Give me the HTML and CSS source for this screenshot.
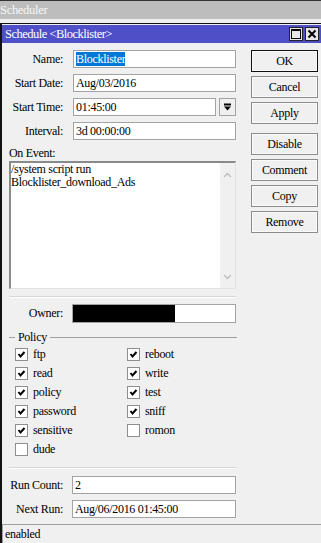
FILE: index.html
```html
<!DOCTYPE html>
<html lang="en">
<head>
  <meta charset="UTF-8" />
  <title>Scheduler</title>
  <link rel="stylesheet" href="styles.css">
</head>
<body>
  <div class="appbar">Scheduler</div>
  <div class="gap"></div>
  <div class="window">
    <!-- title bar -->
    <div class="titlebar">
      <span class="title">Schedule &lt;Blocklister&gt;</span>
      <span class="tbtns">
        <span class="tbtn"><svg width="12" height="12" viewBox="0 0 12 12"><rect x="1.5" y="1.5" width="9" height="9" fill="none" stroke="#000" stroke-width="1"/><rect x="1" y="1" width="10" height="2" fill="#000"/></svg></span>
        <span class="tbtn"><svg width="12" height="12" viewBox="0 0 12 12"><path d="M2.5 2.5 L9.5 9.5 M9.5 2.5 L2.5 9.5" stroke="#000" stroke-width="2"/></svg></span>
      </span>
    </div>
    <div class="content">
      <div class="main">
        <div class="row"><label>Name:</label><div class="field"><span class="sel">Blocklister</span></div></div>
        <div class="row"><label>Start Date:</label><div class="field">Aug/03/2016</div></div>
        <div class="row">
          <label>Start Time:</label>
          <div class="field short">01:45:00</div>
          <div class="drop"><svg width="9" height="9" viewBox="0 0 9 9"><rect x="1" y="0.5" width="7" height="2" fill="#000"/><polygon points="1,3.5 8,3.5 4.5,7.5" fill="#000"/></svg></div>
        </div>
        <div class="row"><label>Interval:</label><div class="field">3d 00:00:00</div></div>

        <div class="evlabel">On Event:</div>
        <div class="textbox">
          <div class="code">/system script run<br>Blocklister_download_Ads</div>
          <div class="vscroll">
            <svg width="9" height="6" viewBox="0 0 9 6"><polyline points="1,5 4.5,1.5 8,5" fill="none" stroke="#bdbdbd" stroke-width="1.3"/></svg>
            <svg width="9" height="6" viewBox="0 0 9 6"><polyline points="1,1 4.5,4.5 8,1" fill="none" stroke="#bdbdbd" stroke-width="1.3"/></svg>
          </div>
        </div>

        <div class="sep"></div>
        <div class="row tall owner"><label>Owner:</label><div class="field"><span class="mask"></span></div></div>

        <div class="legend"><span class="dash"></span><span>Policy</span><span class="line"></span></div>
        <div class="policies">
          <div class="cb"><span class="box on"></span>ftp</div>
          <div class="cb"><span class="box on"></span>reboot</div>
          <div class="cb"><span class="box on"></span>read</div>
          <div class="cb"><span class="box on"></span>write</div>
          <div class="cb"><span class="box on"></span>policy</div>
          <div class="cb"><span class="box on"></span>test</div>
          <div class="cb"><span class="box on"></span>password</div>
          <div class="cb"><span class="box on"></span>sniff</div>
          <div class="cb"><span class="box on"></span>sensitive</div>
          <div class="cb"><span class="box"></span>romon</div>
          <div class="cb"><span class="box"></span>dude</div>
        </div>

        <div class="sep low"></div>
        <div class="row ro"><label>Run Count:</label><div class="field">2</div></div>
        <div class="row ro"><label>Next Run:</label><div class="field">Aug/06/2016 01:45:00</div></div>
      </div>

      <div class="side">
        <div class="btn default">OK</div>
        <div class="btn">Cancel</div>
        <div class="btn">Apply</div>
        <div class="btn spaced">Disable</div>
        <div class="btn">Comment</div>
        <div class="btn">Copy</div>
        <div class="btn">Remove</div>
      </div>
    </div>
    <div class="status">enabled</div>
  </div>
</body>
</html>
```

FILE: styles.css
```css
body { margin: 0; width: 321px; height: 543px; overflow: hidden; background: #f0f0f0; font-family: "Liberation Serif", serif; font-size: 12px; letter-spacing: -0.3px; color: #000; }
.appbar { height: 18px; border-top: 1px solid #333; background: #bdbdbd; color: #f6f6f6; font-size: 12.5px; line-height: 18px; }
.gap { height: 4px; background: #f0f0f0; }
.window { height: 520px; box-sizing: border-box; border-left: 2px solid #111; border-top: 1px solid #111; display: flex; flex-direction: column; }

.titlebar { height: 21px; margin-top: 1px; background: #4f4fc8; display: flex; align-items: center; justify-content: space-between; }
.title { color: #fff; font-size: 12.5px; letter-spacing: -0.5px; padding-left: 3px; }
.tbtns { display: flex; gap: 2px; margin-right: 2px; }
.tbtn { width: 14px; height: 14px; box-sizing: border-box; background: #e6e6e6; border: 1px solid #222; display: flex; align-items: center; justify-content: center; }

.content { flex: 1; display: flex; }
.main { width: 227px; padding: 7px 0 0 7px; }
.side { width: 67px; margin-left: 15px; padding-top: 7px; display: flex; flex-direction: column; gap: 4px; }

.row { display: flex; align-items: center; height: 18px; margin-bottom: 6px; }
.row label { width: 54px; margin-right: 10px; text-align: right; white-space: nowrap; }
.field { flex: 1; height: 18px; box-sizing: border-box; border: 1px solid #a3a3a3; background: #fff; padding: 0 2px; line-height: 16px; white-space: nowrap; overflow: hidden; }
.field.short { flex: none; width: 143px; }
.drop { width: 17px; height: 18px; box-sizing: border-box; margin-left: 3px; border: 1px solid #a3a3a3; background: #f0f0f0; display: flex; align-items: center; justify-content: center; }
.sel { background: #0078d7; color: #fff; }

.evlabel { height: 14px; line-height: 14px; margin-top: 3px; }
.textbox { height: 128px; margin-top: 1px; box-sizing: border-box; border-top: 2px solid #8a8a8a; border-left: 2px solid #8a8a8a; border-right: 1px solid #e2e2e2; border-bottom: 1px solid #e2e2e2; background: #fff; display: flex; }
.code { flex: 1; padding: 0; line-height: 13px; }
.vscroll { width: 15px; background: #f0f0f0; display: flex; flex-direction: column; justify-content: space-between; align-items: center; padding: 9px 0 8px; }

.sep { height: 0; margin: 7px 0 6px; border-top: 1px solid #d6d6d6; border-bottom: 1px solid #fff; }
.sep.low { margin: 8px 0 7px; }
.row.tall { height: 19px; margin-bottom: 7px; }
.row.tall label { margin-right: 9px; }
.owner .field { height: 19px; padding: 0; display: flex; }
.mask { display: block; width: 103px; height: 19px; margin: -1px 0 0 -1px; background: #000; }
.row.ro label { margin-right: 9px; }

.legend { display: flex; align-items: center; height: 14px; margin-bottom: 1px; }
.legend .dash { width: 6px; border-top: 1px solid #a0a0a0; }
.legend span:nth-child(2) { padding: 0 3px 0 3px; }
.legend .line { flex: 1; border-top: 1px solid #a0a0a0; margin-right: -1px; }

.policies { display: grid; grid-template-columns: 112px 1fr; }
.cb { display: flex; align-items: center; height: 19px; padding-left: 6px; }
.box { width: 13px; height: 13px; box-sizing: border-box; border: 1px solid #8e8e8e; background: #fff; margin-right: 5px; }
.box.on { background: #fff url("data:image/svg+xml,%3Csvg xmlns='http://www.w3.org/2000/svg' width='11' height='11'%3E%3Cpolyline points='2.5,5 4.5,7.5 8.5,3' fill='none' stroke='%23000' stroke-width='2'/%3E%3C/svg%3E") no-repeat center; }

.btn { height: 22px; box-sizing: border-box; border: 1px solid #8c8c8c; box-shadow: inset 0 0 0 1px #fafafa; background: #f0f0f0; text-align: center; line-height: 20px; }
.btn.default { border-color: #111; }
.btn.spaced { margin-top: 5px; }

.status { height: 19px; box-sizing: border-box; border-top: 1px solid #a0a0a0; border-left: 1px solid #a0a0a0; padding-left: 2px; line-height: 18px; }
```
